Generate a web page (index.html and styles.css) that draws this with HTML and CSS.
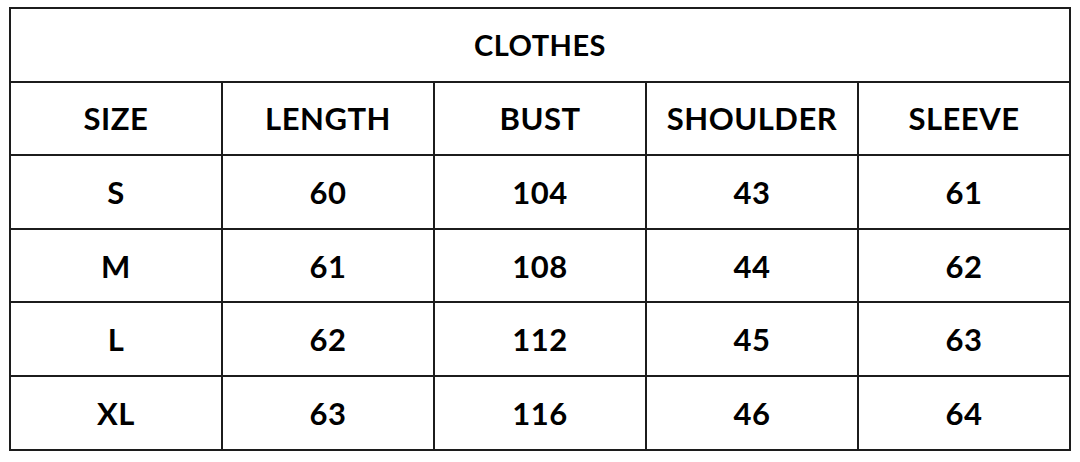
FILE: index.html
```html
<!DOCTYPE html>
<html>
<head>
<meta charset="utf-8">
<link rel="stylesheet" href="styles.css">
</head>
<body>
<table class="size-table">
  <tr class="title-row"><td colspan="5">CLOTHES</td></tr>
  <tr><td>SIZE</td><td>LENGTH</td><td>BUST</td><td>SHOULDER</td><td>SLEEVE</td></tr>
  <tr><td>S</td><td>60</td><td>104</td><td>43</td><td>61</td></tr>
  <tr><td>M</td><td>61</td><td>108</td><td>44</td><td>62</td></tr>
  <tr><td>L</td><td>62</td><td>112</td><td>45</td><td>63</td></tr>
  <tr><td>XL</td><td>63</td><td>116</td><td>46</td><td>64</td></tr>
</table>
</body>
</html>
```
FILE: styles.css
```css
html, body {
  margin: 0;
  padding: 0;
  background: #ffffff;
}
body {
  padding: 7px 0 0 9px;
}
.size-table {
  border-collapse: collapse;
  table-layout: fixed;
  width: 1062px;
  font-family: Lato, "Open Sans", sans-serif;
  font-weight: 700;
  font-size: 31px;
  color: #000;
  letter-spacing: 0.5px;
}
.size-table td {
  border: 2px solid #1c1c1c;
  height: 71.6px;
  padding: 0;
  text-align: center;
  vertical-align: middle;
}
.title-row td {
  font-size: 29px;
}
```
